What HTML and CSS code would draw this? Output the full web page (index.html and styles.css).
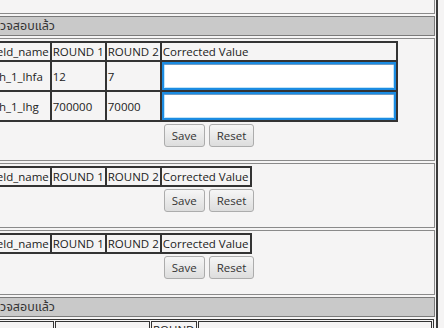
FILE: index.html
```html
<!DOCTYPE html>
<html lang="th">
<head>
    <meta charset="UTF-8">
    <meta name="viewport" content="width=device-width, initial-scale=1.0">
    <title>แก้ไขข้อมูล</title>
    <link rel="stylesheet" href="styles.css">
</head>
<body>
    <div class="page">
        <div class="box top-box"></div>

        <div class="section-title">ตรวจสอบแล้ว</div>

        <div class="box">
            <table class="grid">
                <tr>
                    <th>field_name</th>
                    <th>ROUND 1</th>
                    <th>ROUND 2</th>
                    <th>Corrected Value</th>
                </tr>
                <tr class="data-row">
                    <td>wh_1_lhfa</td>
                    <td>12</td>
                    <td>7</td>
                    <td class="edit"><input type="text" class="fix-input"></td>
                </tr>
                <tr class="data-row">
                    <td>wh_1_lhg</td>
                    <td>700000</td>
                    <td>70000</td>
                    <td class="edit"><input type="text" class="fix-input"></td>
                </tr>
            </table>
            <div class="actions">
                <button>Save</button>
                <button>Reset</button>
            </div>
        </div>

        <div class="box box-empty">
            <table class="grid">
                <tr>
                    <th>field_name</th>
                    <th>ROUND 1</th>
                    <th>ROUND 2</th>
                    <th>Corrected Value</th>
                </tr>
            </table>
            <div class="actions">
                <button>Save</button>
                <button>Reset</button>
            </div>
        </div>

        <div class="box box-empty">
            <table class="grid">
                <tr>
                    <th>field_name</th>
                    <th>ROUND 1</th>
                    <th>ROUND 2</th>
                    <th>Corrected Value</th>
                </tr>
            </table>
            <div class="actions">
                <button>Save</button>
                <button>Reset</button>
            </div>
        </div>

        <div class="section-title">ตรวจสอบแล้ว</div>

        <table class="result">
            <colgroup>
                <col class="c1">
                <col class="c2">
                <col class="c3">
                <col>
            </colgroup>
            <tr>
                <th>field_name</th>
                <th>Value</th>
                <th>ROUND 1</th>
                <th>Corrected Value</th>
            </tr>
        </table>
    </div>
</body>
</html>
```

FILE: styles.css
```css
body {
    font-family: "Open Sans", "Noto Sans Thai", Tahoma, sans-serif;
    font-size: 11.5px;
    color: #222;
    background-color: #f5f4f4;
    margin: 0;
    overflow: hidden;
}
.page {
    box-sizing: border-box;
    width: 458px;
    margin: -30px 0 0 -20px;
    padding: 1px;
    border: 2px solid #3a3a3a;
}
.box {
    border: 1px solid #8a8a8a;
    padding: 2px 3px 13px 3px;
    margin-bottom: 2px;
}
.box-empty {
    padding-bottom: 15px;
}
.top-box {
    box-sizing: border-box;
    height: 41px;
    padding: 0;
}
.section-title {
    box-sizing: border-box;
    height: 20px;
    line-height: 18px;
    padding: 0 2px;
    margin-bottom: 2px;
    background-color: #c9c9c9;
    border: 1px solid #7a7a7a;
    color: #333;
    font-size: 12.5px;
}
.grid {
    border: 1px solid #333;
    border-spacing: 0;
}
.grid th, .grid td {
    border: 1px solid #333;
    padding: 0 1px;
    font-weight: normal;
    text-align: left;
    line-height: 17px;
    white-space: nowrap;
}
.data-row td {
    height: 28px;
}
.grid td.edit {
    padding: 0;
}
.fix-input {
    display: block;
    box-sizing: border-box;
    width: 234px;
    height: 28px;
    margin: 0;
    border: 2px solid #1c8ce2;
    box-shadow: inset 0 1px 0 #6f9cc4, inset 0 0 0 1px #bfe4f8;
    background-color: #fff;
    outline: none;
}
.actions {
    text-align: center;
    margin-top: 2px;
    font-size: 0;
}
.actions button {
    font-family: "Open Sans", Tahoma, sans-serif;
    font-size: 11.5px;
    color: #333;
    height: 23px;
    padding: 0 7px;
    margin: 0 2px;
    border: 1px solid #acacac;
    border-radius: 3px;
    background: linear-gradient(#f6f6f6, #dddddd);
}
.result {
    box-sizing: border-box;
    width: calc(100% - 5px);
    margin: 0 1px 0 4px;
    table-layout: fixed;
    border: 1px solid #333;
    border-spacing: 1px;
}
.result th {
    border: 1px solid #333;
    padding: 0 1px;
    font-weight: normal;
    text-align: left;
    line-height: 15px;
    vertical-align: middle;
}
.result .c1 {
    width: 65px;
}
.result .c2 {
    width: 95px;
}
.result .c3 {
    width: 46px;
}
```
